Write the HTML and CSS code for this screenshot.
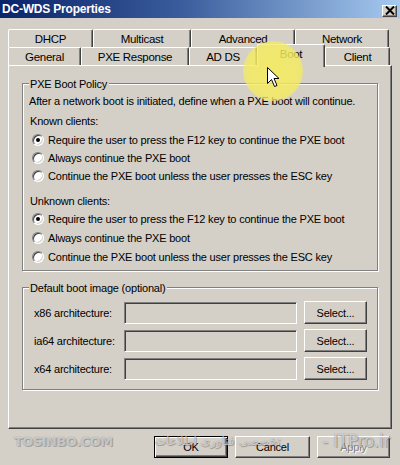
FILE: index.html
```html
<!DOCTYPE html>
<html>
<head>
<meta charset="utf-8">
<title>DC-WDS Properties</title>
<link rel="stylesheet" href="styles.css">
</head>
<body>
<div class="window">
  <div class="titlebar">
    <span class="title">DC-WDS Properties</span>
    <span class="close-btn">
      <svg width="10" height="9" viewBox="0 0 10 9"><path d="M1 0.5 L9 8.5 M9 0.5 L1 8.5" stroke="#000" stroke-width="2"/></svg>
    </span>
  </div>
  <div class="content">
    <div class="tabs">
      <div class="tabrow row-back">
        <div class="tab">DHCP</div>
        <div class="tab">Multicast</div>
        <div class="tab">Advanced</div>
        <div class="tab">Network</div>
      </div>
      <div class="tabrow row-front">
        <div class="tab">General</div>
        <div class="tab">PXE Response</div>
        <div class="tab">AD DS</div>
        <div class="tab selected">Boot</div>
        <div class="tab">Client</div>
      </div>
    </div>
    <div class="panel">
      <div class="group group-policy">
        <div class="group-title">PXE Boot Policy</div>
        <div class="line desc">After a network boot is initiated, define when a PXE boot will continue.</div>
        <div class="line heading">Known clients:</div>
        <div class="line radio first"><span class="radio-dot checked"></span>Require the user to press the F12 key to continue the PXE boot</div>
        <div class="line radio"><span class="radio-dot"></span>Always continue the PXE boot</div>
        <div class="line radio"><span class="radio-dot"></span>Continue the PXE boot unless the user presses the ESC key</div>
        <div class="line heading second">Unknown clients:</div>
        <div class="line radio"><span class="radio-dot checked"></span>Require the user to press the F12 key to continue the PXE boot</div>
        <div class="line radio spaced"><span class="radio-dot"></span>Always continue the PXE boot</div>
        <div class="line radio spaced"><span class="radio-dot"></span>Continue the PXE boot unless the user presses the ESC key</div>
      </div>
      <div class="group group-image">
        <div class="group-title">Default boot image (optional)</div>
        <div class="arch-row first">
          <span class="arch-label">x86 architecture:</span>
          <span class="textbox"></span>
          <span class="btn select-btn">Select...</span>
        </div>
        <div class="arch-row">
          <span class="arch-label">ia64 architecture:</span>
          <span class="textbox"></span>
          <span class="btn select-btn">Select...</span>
        </div>
        <div class="arch-row">
          <span class="arch-label">x64 architecture:</span>
          <span class="textbox"></span>
          <span class="btn select-btn">Select...</span>
        </div>
      </div>
    </div>
    <div class="buttons">
      <span class="btn default-btn">OK</span>
      <span class="btn cancel-btn">Cancel</span>
      <span class="btn apply-btn disabled">Apply</span>
    </div>
  </div>

  <div class="highlight"></div>
  <svg class="cursor" width="13" height="21" viewBox="0 0 13 21">
    <path d="M0.5 0.5 L0.5 16.5 L4.5 12.5 L7.5 19.5 L10 18.5 L7 11.5 L12 11.5 Z" fill="#fff" stroke="#000" stroke-width="1"/>
  </svg>
  <div class="watermark">
    <span class="wm-left">TOSINBO.COM</span>
    <span class="wm-mid" dir="rtl">تخصصی فناوری اطلاعات</span>
    <span class="wm-right">- ITPro.ir</span>
  </div>
</div>
</body>
</html>
```
FILE: styles.css
```css
* { box-sizing: border-box; }

html, body {
  margin: 0;
  padding: 0;
  background: #d4d0c8;
}

body {
  width: 400px;
  height: 465px;
  overflow: hidden;
  font-family: "Liberation Sans", Arial, sans-serif;
  font-size: 11px;
  letter-spacing: -0.2px;
  color: #000;
}

.window {
  position: relative;
  width: 400px;
  height: 465px;
  overflow: hidden;
  background: #d4d0c8;
}

.titlebar {
  height: 18px;
  display: flex;
  align-items: center;
  justify-content: space-between;
  padding: 0 3px 0 2px;
  background: linear-gradient(to right, #0a246a 0%, #3a5c9c 45%, #a6caf0 100%);
}

.title {
  color: #fff;
  font-weight: bold;
  font-size: 12px;
  letter-spacing: -0.2px;
}

.close-btn {
  width: 15px;
  height: 12px;
  margin-top: 3px;
  display: flex;
  align-items: center;
  justify-content: center;
  background: #d4d0c8;
  border: 1px solid;
  border-color: #fff #404040 #404040 #fff;
  box-shadow: inset -1px -1px 0 #808080;
}

.content {
  padding: 11px 8px 0 8px;
}

.tabs {
  display: flex;
  flex-direction: column;
}

.tabrow {
  display: grid;
  grid-template-rows: 18px;
}

.row-back {
  grid-template-columns: 85px 98px 104px 94px;
}

.row-front {
  grid-template-columns: 73px 108px 68px 68px 65px;
}

.tab {
  height: 18px;
  display: flex;
  align-items: center;
  justify-content: center;
  background: #d4d0c8;
  border-top: 1px solid #fff;
  border-left: 1px solid #fff;
  border-right: 1px solid #404040;
  box-shadow: inset -1px 0 0 #808080;
  border-top-left-radius: 2px;
  border-top-right-radius: 2px;
  font-size: 11.5px;
  letter-spacing: -0.3px;
  padding-top: 1px;
}

.tab.selected {
  position: relative;
  z-index: 2;
  margin-top: -3px;
  height: 23px;
  align-items: flex-start;
  padding-top: 3px;
}

.panel {
  height: 364px;
  border: 1px solid;
  border-color: #fff #404040 #404040 #fff;
  box-shadow: inset -1px -1px 0 #808080;
  padding: 17px 13px 0 13px;
}

.group {
  border: 1px solid #808080;
  box-shadow: inset 1px 1px 0 #fff, 1px 1px 0 #fff;
  padding: 0 7px 4px 7px;
}

.group-title {
  width: fit-content;
  margin-top: -7px;
  margin-left: -1px;
  padding: 0 2px 0 1px;
  background: #d4d0c8;
  line-height: 14px;
}

.line {
  height: 18px;
  line-height: 18px;
  white-space: nowrap;
}

.desc { margin-top: 1px; margin-left: -1px; }
.heading { margin-top: 2px; }
.heading.second { margin-top: 7px; }
.radio.first { margin-top: 1px; }
.radio.spaced { margin-top: 1px; }

.radio {
  display: flex;
  align-items: center;
}

.radio-dot {
  position: relative;
  width: 12px;
  height: 12px;
  margin: 0 4px 0 2px;
  border-radius: 50%;
  background: #fff;
  border: 1px solid;
  border-color: #808080 #fff #fff #808080;
  box-shadow: inset 1px 1px 0 #404040, inset -1px -1px 0 #d4d0c8;
  flex: none;
}

.radio-dot.checked::after {
  content: "";
  position: absolute;
  left: 3px;
  top: 3px;
  width: 4px;
  height: 4px;
  border-radius: 50%;
  background: #000;
}

.group-image {
  margin-top: 16px;
  padding-bottom: 9px;
}

.arch-row {
  display: flex;
  align-items: center;
  height: 23px;
  margin-top: 5px;
}

.arch-row.first { margin-top: 6px; }

.arch-label {
  width: 94px;
  padding-left: 4px;
  white-space: nowrap;
}

.textbox {
  width: 173px;
  height: 22px;
  margin-top: 1px;
  background: #d4d0c8;
  border: 1px solid;
  border-color: #808080 #fff #fff #808080;
  box-shadow: inset 1px 1px 0 #404040, inset -1px -1px 0 #d4d0c8;
}

.btn {
  display: flex;
  align-items: center;
  justify-content: center;
  height: 23px;
  background: #d4d0c8;
  border: 1px solid;
  border-color: #fff #404040 #404040 #fff;
  box-shadow: inset -1px -1px 0 #808080;
}

.select-btn {
  width: 63px;
  margin-left: 7px;
}

.buttons {
  display: flex;
  justify-content: flex-end;
  gap: 7px;
  margin-top: 7px;
  padding-right: 2px;
}

.buttons .btn { height: 22px; }

.default-btn {
  width: 74px;
  border: 1px solid #000;
  box-shadow: inset 1px 1px 0 #fff, inset -1px -1px 0 #404040, inset -2px -2px 0 #808080;
}

.cancel-btn { width: 75px; }
.apply-btn { width: 73px; }

.disabled {
  color: #808080;
  text-shadow: 1px 1px 0 #fff;
}

.highlight {
  position: absolute;
  left: 243px;
  top: 41px;
  width: 60px;
  height: 60px;
  border-radius: 50%;
  background: radial-gradient(circle, rgba(245, 236, 95, 0.9) 0%, rgba(245, 236, 95, 0.82) 60%, rgba(245, 236, 95, 0.4) 90%, rgba(245, 236, 95, 0) 100%);
  z-index: 5;
  pointer-events: none;
}

.cursor {
  position: absolute;
  left: 267px;
  top: 67px;
  z-index: 6;
}

.watermark {
  position: absolute;
  left: 14px;
  top: 431px;
  width: 376px;
  display: flex;
  align-items: center;
  gap: 6px;
  z-index: 7;
  color: rgba(255, 255, 255, 0.6);
  text-shadow: 0 0 1px rgba(60, 60, 60, 0.6), 1px 1px 0 rgba(90, 90, 90, 0.35);
  pointer-events: none;
  white-space: nowrap;
  letter-spacing: 0;
}

.wm-left {
  font-family: "DejaVu Sans", sans-serif;
  font-size: 13px;
  font-weight: bold;
  letter-spacing: -0.5px;
}

.wm-mid {
  flex: 1;
  text-align: center;
  font-family: "DejaVu Sans", sans-serif;
  font-size: 12px;
}

.wm-right {
  font-family: "DejaVu Sans", sans-serif;
  font-size: 17px;
  letter-spacing: -0.3px;
}
```
